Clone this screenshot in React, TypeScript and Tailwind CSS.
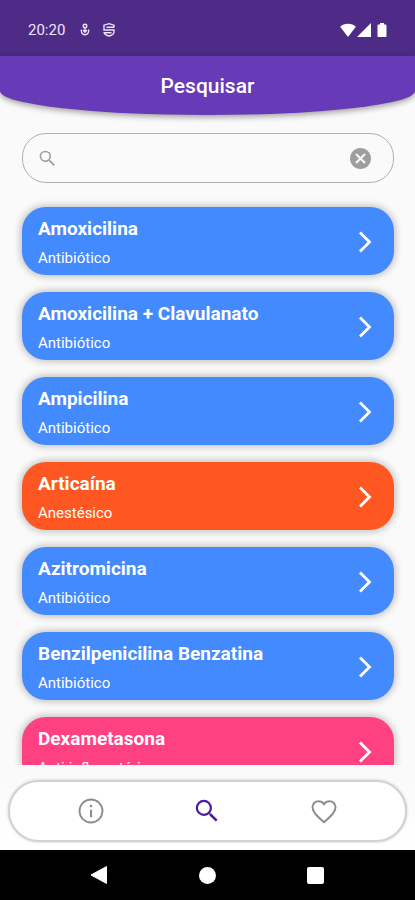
import { useState } from "react";

type Medicine = { name: string; kind: string; color: string };

const medicines: Medicine[] = [
  { name: "Amoxicilina", kind: "Antibiótico", color: "bg-[#448aff]" },
  { name: "Amoxicilina + Clavulanato", kind: "Antibiótico", color: "bg-[#448aff]" },
  { name: "Ampicilina", kind: "Antibiótico", color: "bg-[#448aff]" },
  { name: "Articaína", kind: "Anestésico", color: "bg-[#ff5722]" },
  { name: "Azitromicina", kind: "Antibiótico", color: "bg-[#448aff]" },
  { name: "Benzilpenicilina Benzatina", kind: "Antibiótico", color: "bg-[#448aff]" },
  { name: "Dexametasona", kind: "Anti-inflamatório", color: "bg-[#ff4081]" },
];

function SearchIcon({ className }: { className: string }) {
  return (
    <svg viewBox="0 0 24 24" fill="currentColor" className={className} aria-hidden="true">
      <path d="M15.500 14h-.79l-.28-.27A6.471 6.471 0 0 0 16 9.500 6.500 6.500 0 1 0 9.500 16c1.610 0 3.090-.59 4.230-1.570l.27.28v.79l5 4.990L20.490 19l-4.990-5zm-6 .2a4.700 4.700 0 1 1 0-9.400 4.700 4.700 0 0 1 0 9.400z" />
    </svg>
  );
}

function StatusBar() {
  return (
    <div className="flex h-14 items-end justify-between bg-[#4e2b87] px-7 pb-3 text-[#ece6f6]">
      <div className="flex h-7 items-center">
        <span className="text-[15px] leading-7">20:20</span>
        <svg viewBox="0 0 12 16" className="ml-3.5 h-4 w-3" fill="none" stroke="currentColor" strokeWidth="1.4" aria-hidden="true">
          <circle cx="6" cy="4" r="1.800" />
          <path d="M6 6v4M4 8l2 2.200L8 8" />
          <path d="M2.500 7.500C1.500 10 3.500 12.800 6 12.800s4.500-2.800 3.500-5.300" />
        </svg>
        <svg viewBox="0 0 12 16" className="ml-3 h-4 w-3" fill="none" stroke="currentColor" strokeWidth="1.4" aria-hidden="true">
          <path d="M11 5.500V3.200L6 1.700 1 3.200V8h10v2c0 2-2 3.300-5 4-3-.7-5-2-5-4M3.500 5.200H11M1 10.800h7.500" />
        </svg>
      </div>
      <div className="flex h-7 items-center text-white">
        <svg viewBox="0 0 16 16" className="size-4" fill="currentColor" aria-hidden="true">
          <path d="M8 15 .2 4.800C2 3 4.800 1.800 8 1.800s6 1.200 7.800 3z" />
        </svg>
        <svg viewBox="0 0 14 14" className="ml-px size-3.5" fill="currentColor" aria-hidden="true">
          <path d="M14 0v14H0z" />
        </svg>
        <svg viewBox="0 0 10 16" className="ml-1.5 h-4 w-2.5" fill="currentColor" aria-hidden="true">
          <path d="M3 1h4v1.500h1.600c.5 0 .9.400.9.900v10.700c0 .5-.4.900-.9.900H1.400a.9.900 0 0 1-.9-.9V3.400c0-.5.400-.9.900-.9H3z" />
        </svg>
      </div>
    </div>
  );
}

function SearchField() {
  const [query, setQuery] = useState("");
  return (
    <div className="mt-[18px] mr-[21px] ml-[22px] flex h-[50px] items-center rounded-[24px] border border-[#b0b0b0] pr-5.5 pl-3.5 text-[#9e9e9e]">
      <label htmlFor="search" className="shrink-0">
        <SearchIcon className="size-[21px]" />
      </label>
      <input
        id="search"
        type="text"
        aria-label="Pesquisar"
        value={query}
        onChange={(e) => setQuery(e.target.value)}
        className="h-full min-w-0 flex-1 bg-transparent px-3 text-base text-gray-800 outline-none"
      />
      <button type="button" aria-label="Limpar" onClick={() => setQuery("")} className="shrink-0">
        <svg viewBox="2 2 20 20" className="size-[21px]" fill="currentColor" aria-hidden="true">
          <path d="M12 2C6.470 2 2 6.470 2 12s4.470 10 10 10 10-4.470 10-10S17.530 2 12 2zm5 13.590L15.590 17 12 13.410 8.410 17 7 15.590 10.590 12 7 8.410 8.410 7 12 10.590 15.590 7 17 8.410 13.410 12 17 15.590z" />
        </svg>
      </button>
    </div>
  );
}

function MedicineCard({ name, kind, color }: Medicine) {
  return (
    <li>
      <button
        type="button"
        className={`flex w-full items-center justify-between rounded-[24px] pt-2 pr-5.5 pb-[7px] pl-4 text-left text-white shadow-[0_0_7px_2px_rgba(0,0,0,0.22)] ${color}`}
      >
        <span className="flex flex-col gap-1.5">
          <span className="text-[19px] leading-[27px] font-bold">{name}</span>
          <span className="text-[15px] leading-5">{kind}</span>
        </span>
        <svg viewBox="0 0 14 22" className="h-[22px] w-3.5" fill="none" stroke="currentColor" strokeWidth="2.8" aria-hidden="true">
          <path d="m2 1.500 9.500 9.500L2 20.500" />
        </svg>
      </button>
    </li>
  );
}

function TabBar() {
  return (
    <nav className="bg-linear-to-b from-[#fafafa] to-white px-2 pb-2">
      <div className="flex h-[62px] items-center justify-around rounded-full border-2 border-[#d2d2d2] bg-white px-[23px] text-[#8e8e8e] shadow-[0_0_3px_rgba(0,0,0,0.2)]">
        <button type="button" aria-label="Informações">
          <svg viewBox="0 0 24 24" className="size-[30px]" fill="none" stroke="currentColor" strokeWidth="1.500" aria-hidden="true">
            <circle cx="12" cy="12" r="9.200" />
            <path d="M12 11v6M12 7v2" strokeWidth="1.700" />
          </svg>
        </button>
        <button type="button" aria-label="Pesquisar" aria-current="page" className="text-[#4a1f9e]">
          <SearchIcon className="size-[30px]" />
        </button>
        <button type="button" aria-label="Favoritos">
          <svg viewBox="0 0 24 24" className="size-[30px]" fill="none" stroke="currentColor" strokeWidth="1.600" aria-hidden="true">
            <path d="M12 21C6.200 15.700 2.800 12.700 2.800 8.900c0-2.650 2.050-4.700 4.700-4.700 1.800 0 3.500.9 4.500 2.300 1-1.400 2.700-2.300 4.500-2.300 2.650 0 4.700 2.050 4.700 4.700 0 3.800-3.400 6.800-9.200 12.100z" />
          </svg>
        </button>
      </div>
    </nav>
  );
}

function SystemBar() {
  return (
    <div className="flex h-[50px] items-center justify-center gap-[91px] bg-black pr-0.5 text-white">
      <button type="button" aria-label="Voltar">
        <svg viewBox="0 0 18 18" className="size-[18px]" fill="currentColor" aria-hidden="true">
          <path d="M16.500.600v16.800L1 9z" stroke="currentColor" strokeLinejoin="round" />
        </svg>
      </button>
      <button type="button" aria-label="Início" className="size-[17px] rounded-full bg-white" />
      <button type="button" aria-label="Recentes" className="size-[17px] rounded-xs bg-white" />
    </div>
  );
}

export default function App() {
  return (
    <div className="flex h-screen flex-col overflow-hidden bg-[#fafafa] font-[Roboto,sans-serif]">
      <StatusBar />
      <header className="rounded-b-[50%_24px] bg-[#673ab7] pt-4 pb-[15px] text-center shadow-[0_2px_6px_rgba(0,0,0,0.4)]">
        <h1 className="text-[21px] leading-7 font-medium text-white">Pesquisar</h1>
      </header>
      <SearchField />
      <main className="mt-3 min-h-0 flex-1 overflow-y-auto pt-3 pr-[21px] pl-[22px] [scrollbar-width:none]">
        <ul className="flex flex-col gap-[17px]">
          {medicines.map((m) => (
            <MedicineCard key={m.name} {...m} />
          ))}
        </ul>
      </main>
      <div className="h-[15px] shrink-0" />
      <TabBar />
      <SystemBar />
    </div>
  );
}
